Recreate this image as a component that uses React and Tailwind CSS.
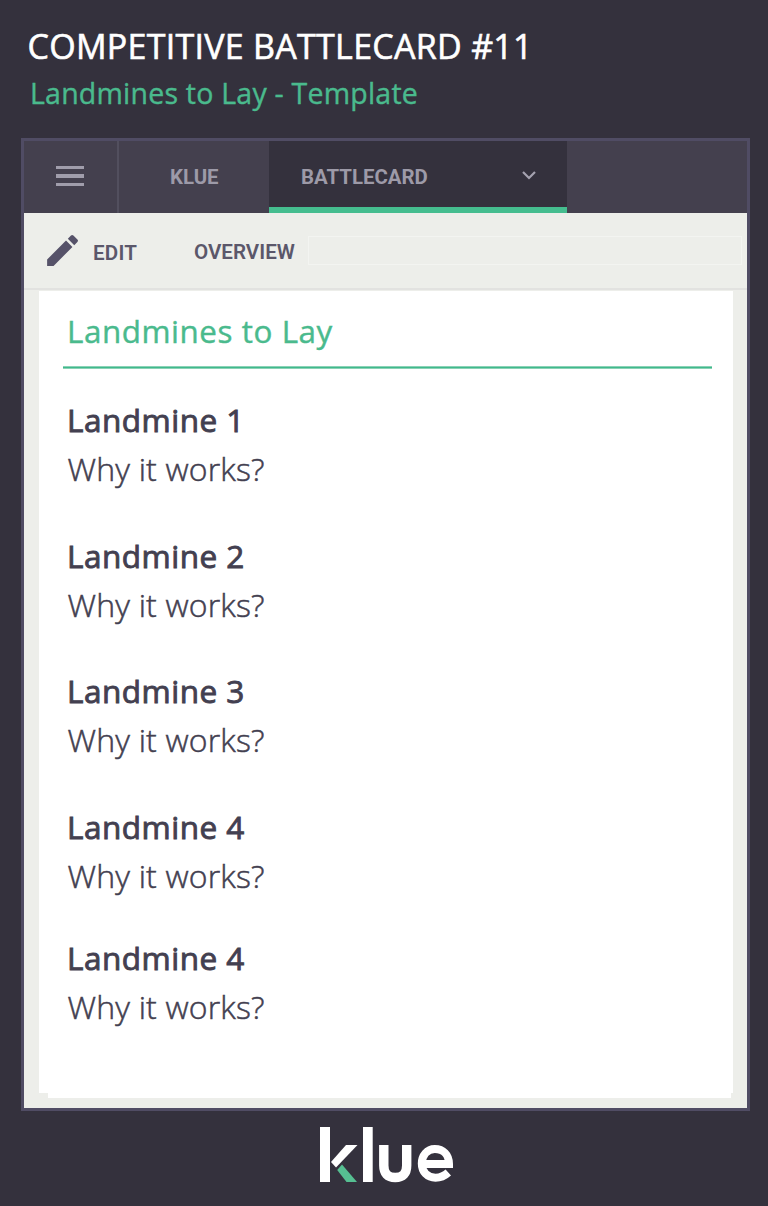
import React from "react";

const landmines = [
  { title: "Landmine 1", box: "h-[136px]" },
  { title: "Landmine 2", box: "h-[135px]" },
  { title: "Landmine 3", box: "h-[136px]" },
  { title: "Landmine 4", box: "h-[131px]" },
  { title: "Landmine 4", box: "h-[130px]" },
];

function PageHeader() {
  return (
    <header className="h-[138px] shrink-0 pt-[22px] whitespace-nowrap">
      <h1 className="ml-[27.5px] text-[34px] leading-[48px] tracking-[0.28px] text-white [-webkit-text-stroke:0.6px_#fff]">
        COMPETITIVE BATTLECARD #11
      </h1>
      <p className="ml-[30px] mt-[3px] text-[28.5px] leading-[40px] tracking-[0.22px] text-[#4aba8d] [-webkit-text-stroke:0.4px_#4aba8d]">
        Landmines to Lay - Template
      </p>
    </header>
  );
}

function TabBar() {
  return (
    <nav className="flex h-[72px] bg-[#44404e] font-['Roboto',sans-serif] text-[20.4px] font-bold text-[#9d9aa8]">
      <div className="flex w-[95px] items-center border-r-2 border-[#524f5e] pl-[32px]">
        <div className="mb-[2px] flex w-[28px] flex-col gap-[5px]">
          <span className="h-[3.5px] bg-[#a09dab]" />
          <span className="h-[3.5px] bg-[#a09dab]" />
          <span className="h-[3.5px] bg-[#a09dab]" />
        </div>
      </div>
      <div className="flex w-[150px] items-center pl-[51px]">KLUE</div>
      <div className="flex w-[298px] items-center justify-between border-b-[6px] border-[#45bd8f] bg-[#34313d] pt-[6px] pr-[30px] pl-[32px]">
        <span>BATTLECARD</span>
        <svg className="mb-[4px]" width="16" height="10" viewBox="0 0 16 10" fill="none" stroke="#a5a2b0" strokeWidth="2.2">
          <path d="M2 2 L8 8 L14 2" />
        </svg>
      </div>
    </nav>
  );
}

function Toolbar() {
  return (
    <div className="flex h-[77px] items-center border-b-2 border-[#e2e2e0] bg-[#edeeea] font-['Roboto',sans-serif] text-[20.6px] font-semibold text-[#5b576a]">
      <svg className="ml-[18px]" width="41" height="41" viewBox="0 0 24 24" fill="#565269">
        <path d="M3 17.25V21h3.75L17.81 9.94l-3.75-3.75L3 17.25zM20.71 7.04a.996.996 0 0 0 0-1.41l-2.34-2.34a.996.996 0 0 0-1.41 0l-1.83 1.83 3.75 3.75 1.83-1.83z" />
      </svg>
      <span className="ml-[10px] w-[101px] pt-[6px] tracking-[0.2px]">EDIT</span>
      <span className="w-[114px] pt-[4px]">OVERVIEW</span>
      <div className="h-[29px] w-[434px] border border-[#f3f4f1]" />
    </div>
  );
}

function Card() {
  return (
    <section className="h-[802px] w-[694px] bg-white pt-[19px] pl-[24px] text-[32px] text-[#434050]">
      <h2 className="ml-[4px] text-[31.4px] leading-[42px] tracking-[0.55px] text-[#4aba8d] [-webkit-text-stroke:0.4px_#4aba8d]">
        Landmines to Lay
      </h2>
      <div className="mt-[14px] mb-[27px] h-[3px] w-[649px] border-y border-[#8ad2b6] bg-[#40b98c]" />
      <ul className="ml-[4px]">
        {landmines.map((item, i) => (
          <li key={i} className={item.box}>
            <h3 className="text-[31.5px] leading-[48px] font-normal tracking-[0.5px] [-webkit-text-stroke:0.9px_#434050]">
              {item.title}
            </h3>
            <p className="ml-[0.5px] leading-[50px] font-light tracking-[0.18px] [-webkit-text-stroke:0.5px_#434050]">
              Why it works?
            </p>
          </li>
        ))}
      </ul>
    </section>
  );
}

function Logo() {
  return (
    <svg className="ml-[320px] mt-[16px]" width="134" height="56" viewBox="0 0 134 56" fill="none">
      <rect x="0" y="0" width="10" height="55" fill="#fff" />
      <polygon points="26,18 37.5,18 16,40.5 11,35" fill="#fff" />
      <polygon points="22,37.5 37,55 26.5,55 17.2,43" fill="#56bf92" />
      <rect x="43" y="0" width="9.7" height="55" fill="#fff" />
      <path d="M63.8 18V38.5Q63.8 50.5 75.2 50.5Q86.7 50.5 86.7 38.5V18" stroke="#fff" strokeWidth="9.4" />
      <path d="M101 37H129C129 27.5 123 22 114.8 22C107 22 101.8 28.5 101.8 36.5C101.8 45 107.5 50.7 115.5 50.7C121 50.7 124.5 49 128.3 45.5" stroke="#fff" strokeWidth="8" />
    </svg>
  );
}

export default function App() {
  return (
    <main className="flex h-[1206px] w-[768px] flex-col overflow-hidden bg-[#34313d] font-['Open_Sans','Noto_Sans',sans-serif]">
      <PageHeader />
      <div className="ml-[21px] h-[973px] w-[729px] shrink-0 border-[3px] border-[#504c64] bg-[#edeeea]">
        <TabBar />
        <Toolbar />
        <div className="pt-px pl-[15px]">
          <Card />
          <div className="ml-[9px] h-[5px] w-[683px] bg-white" />
        </div>
      </div>
      <Logo />
    </main>
  );
}
